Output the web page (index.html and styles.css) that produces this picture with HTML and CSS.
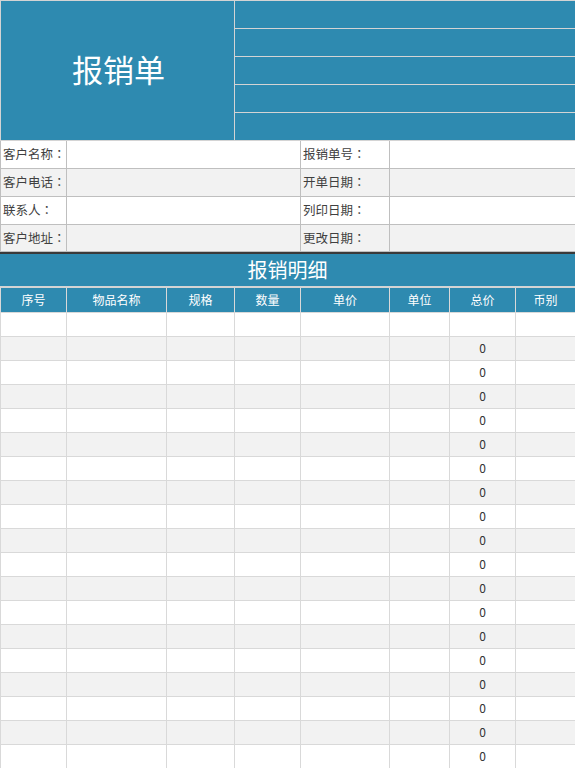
FILE: index.html
```html
<!DOCTYPE html>
<html lang="zh">
<head>
<meta charset="utf-8">
<title>报销单</title>
<link rel="stylesheet" href="styles.css">
</head>
<body>
<div class="sheet">
  <div class="top">
    <div class="title">报销单</div>
    <div class="top-right">
      <div class="tr"></div><div class="tr"></div><div class="tr"></div><div class="tr"></div><div class="tr"></div>
    </div>
  </div>
  <div class="info">
    <div class="c lbl">客户名称<span class="colon">：</span></div><div class="c"></div><div class="c lbl">报销单号<span class="colon">：</span></div><div class="c"></div>
    <div class="c lbl alt">客户电话<span class="colon">：</span></div><div class="c alt"></div><div class="c lbl alt">开单日期<span class="colon">：</span></div><div class="c alt"></div>
    <div class="c lbl">联系人<span class="colon">：</span></div><div class="c"></div><div class="c lbl">列印日期<span class="colon">：</span></div><div class="c"></div>
    <div class="c lbl alt">客户地址<span class="colon">：</span></div><div class="c alt"></div><div class="c lbl alt">更改日期<span class="colon">：</span></div><div class="c alt"></div>
  </div>
  <div class="section-title">报销明细</div>
  <div class="head">
    <div class="h">序号</div><div class="h">物品名称</div><div class="h">规格</div><div class="h">数量</div><div class="h">单价</div><div class="h">单位</div><div class="h">总价</div><div class="h">币别</div>
  </div>
  <div class="body">
    <div class="row"><div></div><div></div><div></div><div></div><div></div><div></div><div></div><div></div></div>
    <div class="row alt"><div></div><div></div><div></div><div></div><div></div><div></div><div>0</div><div></div></div>
    <div class="row"><div></div><div></div><div></div><div></div><div></div><div></div><div>0</div><div></div></div>
    <div class="row alt"><div></div><div></div><div></div><div></div><div></div><div></div><div>0</div><div></div></div>
    <div class="row"><div></div><div></div><div></div><div></div><div></div><div></div><div>0</div><div></div></div>
    <div class="row alt"><div></div><div></div><div></div><div></div><div></div><div></div><div>0</div><div></div></div>
    <div class="row"><div></div><div></div><div></div><div></div><div></div><div></div><div>0</div><div></div></div>
    <div class="row alt"><div></div><div></div><div></div><div></div><div></div><div></div><div>0</div><div></div></div>
    <div class="row"><div></div><div></div><div></div><div></div><div></div><div></div><div>0</div><div></div></div>
    <div class="row alt"><div></div><div></div><div></div><div></div><div></div><div></div><div>0</div><div></div></div>
    <div class="row"><div></div><div></div><div></div><div></div><div></div><div></div><div>0</div><div></div></div>
    <div class="row alt"><div></div><div></div><div></div><div></div><div></div><div></div><div>0</div><div></div></div>
    <div class="row"><div></div><div></div><div></div><div></div><div></div><div></div><div>0</div><div></div></div>
    <div class="row alt"><div></div><div></div><div></div><div></div><div></div><div></div><div>0</div><div></div></div>
    <div class="row"><div></div><div></div><div></div><div></div><div></div><div></div><div>0</div><div></div></div>
    <div class="row alt"><div></div><div></div><div></div><div></div><div></div><div></div><div>0</div><div></div></div>
    <div class="row"><div></div><div></div><div></div><div></div><div></div><div></div><div>0</div><div></div></div>
    <div class="row alt"><div></div><div></div><div></div><div></div><div></div><div></div><div>0</div><div></div></div>
    <div class="row"><div></div><div></div><div></div><div></div><div></div><div></div><div>0</div><div></div></div>
  </div>
</div>
</body>
</html>
```
FILE: styles.css
```css
html, body {
  margin: 0;
  padding: 0;
  background: #ffffff;
  overflow: hidden;
}
.sheet {
  width: 575px;
  font-family: "Noto Sans CJK SC", "Noto Sans", sans-serif;
  color: #333333;
  font-size: 12px;
}
.top {
  display: grid;
  grid-template-columns: 233px 340px;
  column-gap: 1px;
  padding: 1px 0 1px 1px;
  background: #d4d4d4;
  height: 139px;
}
.title {
  background: #2e8ab0;
  color: #ffffff;
  font-size: 31px;
  display: flex;
  align-items: center;
  justify-content: center;
  padding: 0 0 4px 2px;
}
.top-right {
  display: grid;
  grid-template-rows: repeat(5, 27px);
  row-gap: 1px;
}
.tr {
  background: #2e8ab0;
}
.info {
  display: grid;
  grid-template-columns: 65px 233px 88px 185px;
  grid-template-rows: 27px 27px 27px 26px;
  gap: 1px;
  padding: 0 0 1px 1px;
  background: #bfbfbf;
  border-bottom: 2px solid #3a3a3a;
}
.c {
  background: #ffffff;
  display: flex;
  align-items: center;
}
.c.alt {
  background: #f2f2f2;
}
.lbl {
  padding: 0 0 2px 2px;
  white-space: nowrap;
  color: #404040;
  font-size: 12.5px;
}
.colon {
  font-family: "Noto Sans CJK JP", "Noto Sans CJK SC", sans-serif;
}
.section-title {
  background: #2e8ab0;
  color: #ffffff;
  font-size: 20px;
  display: flex;
  align-items: center;
  justify-content: center;
  border-bottom: 2px solid #d4d4d4;
  padding-bottom: 2px;
  box-sizing: border-box;
  height: 34px;
}
.head {
  display: grid;
  grid-template-columns: 65px 99px 67px 65px 88px 59px 65px 59px;
  column-gap: 1px;
  padding-left: 1px;
  background: #d9d9d9;
  height: 24px;
}
.h {
  background: #2e8ab0;
  color: #ffffff;
  display: flex;
  align-items: center;
  justify-content: center;
  padding-bottom: 2px;
}
.body {
  display: flex;
  flex-direction: column;
  gap: 1px;
  padding-top: 1px;
  background: #d9d9d9;
}
.row {
  display: grid;
  grid-template-columns: 65px 99px 67px 65px 88px 59px 65px 59px;
  column-gap: 1px;
  padding-left: 1px;
  height: 23px;
}
.row > div {
  background: #ffffff;
  display: flex;
  align-items: center;
  justify-content: center;
  color: #333333;
  padding-bottom: 2px;
}
.row.alt > div {
  background: #f2f2f2;
}
```
